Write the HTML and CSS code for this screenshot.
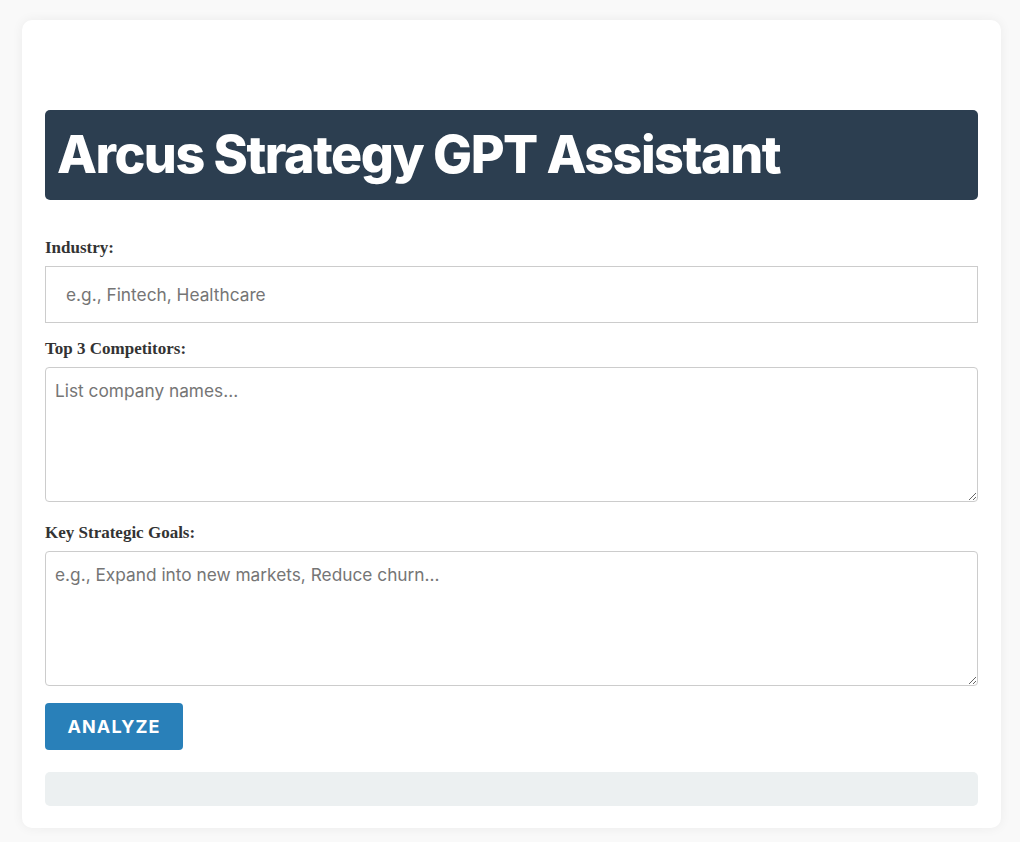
FILE: index.html
```html
<!DOCTYPE html>
<html lang="en">
<head>
  <meta charset="UTF-8" />
  <title>Arcus Strategy GPT Assistant</title>
  <link rel="stylesheet" href="styles.css">
</head>
<body>

  <div class="container">
    <h1 class="title">Arcus Strategy GPT Assistant</h1>

    <form id="strategy-form" class="strategy-form">
      <label for="industry">Industry:</label>
      <input type="text" id="industry" class="text-input" placeholder="e.g., Fintech, Healthcare">

      <label for="competitors">Top 3 Competitors:</label>
      <textarea id="competitors" rows="5" placeholder="List company names..."></textarea>

      <label for="goals">Key Strategic Goals:</label>
      <textarea id="goals" rows="5" placeholder="e.g., Expand into new markets, Reduce churn..."></textarea>

      <button type="submit">Analyze</button>
    </form>

    <div id="output" class="output"></div>
  </div>

</body>
</html>
```

FILE: styles.css
```css
body {
  margin: 0;
  padding: 20px 19px 14px 22px;
  background: #f9f9f9;
  font-family: "Liberation Serif", serif;
  color: #333;
}

.container {
  background: #fff;
  border-radius: 10px;
  box-shadow: 0 0 12px rgba(0,0,0,0.06);
  padding: 90px 23px 22px 23px;
}

.title {
  margin: 0 0 38px 0;
  padding: 16px 12px;
  background: #2c3e50;
  color: #fff;
  border-radius: 5px;
  font-family: Inter, sans-serif;
  font-size: 52px;
  font-weight: 800;
  line-height: 58px;
  letter-spacing: -1.5px;
}

.strategy-form {
  display: flex;
  flex-direction: column;
}

.strategy-form label {
  font-size: 17px;
  font-weight: bold;
  line-height: 20px;
  margin-bottom: 8px;
}

input, textarea {
  box-sizing: border-box;
  width: 100%;
  font-family: Inter, sans-serif;
  font-size: 17.3px;
  color: #333;
}

input::placeholder, textarea::placeholder {
  color: #757575;
}

.text-input {
  height: 57px;
  padding: 0 20px;
  border: 1px solid #ccc;
  border-radius: 0;
  margin-bottom: 16px;
}

textarea {
  height: 135px;
  padding: 12px 9px 10px 9px;
  border: 1px solid #ccc;
  border-radius: 4px;
  margin-bottom: 21px;
  resize: vertical;
}

textarea#goals {
  margin-bottom: 17px;
}

button {
  align-self: flex-start;
  width: 138px;
  height: 47px;
  background: #2980b9;
  color: white;
  border: none;
  border-radius: 4px;
  font-family: Inter, sans-serif;
  font-size: 18px;
  font-weight: 700;
  letter-spacing: 1.1px;
  line-height: 45px;
  text-transform: uppercase;
  cursor: pointer;
}

.output {
  margin-top: 22px;
  height: 34px;
  background: #ecf0f1;
  border-radius: 5px;
}
```
